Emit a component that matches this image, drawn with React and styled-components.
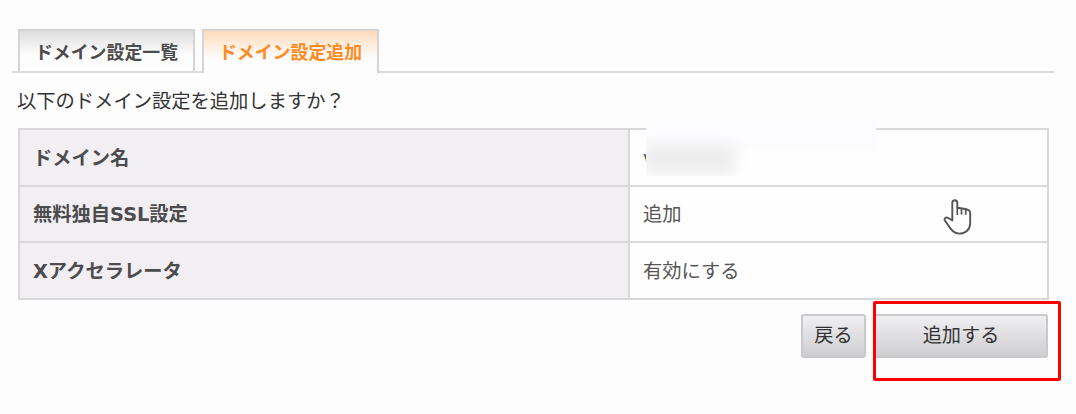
import React from "react";
import styled, { createGlobalStyle } from "styled-components";

const GlobalStyle = createGlobalStyle`
  * {
    box-sizing: border-box;
  }

  body {
    margin: 0;
    background-color: #fdfdfd;
    font-family: "DejaVu Sans", "Noto Sans CJK JP", sans-serif;
    color: #444;
  }
`;

const Page = styled.main`
  width: 1076px;
  height: 414px;
  padding: 29px 0 0 12px;
  overflow: hidden;
`;

// Tabs
const TabList = styled.div`
  display: flex;
  gap: 7px;
  width: 1042px;
  height: 44px;
  padding-left: 6px;
  border-bottom: 2px solid #dcdcde;
`;

const Tab = styled.button`
  width: ${({ $active }) => ($active ? "177px" : "177px")};
  height: ${({ $active }) => ($active ? "44px" : "42px")};
  padding: ${({ $active }) => ($active ? "2px 0 0" : "3px 0 0")};
  border: 2px solid #d4d4d6;
  border-bottom: none;
  background: ${({ $active }) =>
    $active
      ? "linear-gradient(#ffdcbb, #fdfdfd 65%)"
      : "linear-gradient(#dededf, #fdfdfd 60%)"};
  color: ${({ $active }) => ($active ? "#ff8a1f" : "#4c4c4c")};
  font-family: inherit;
  font-size: 17.9px;
  font-weight: 700;
  line-height: 36px;
  white-space: nowrap;
`;

const Message = styled.p`
  margin: 14px 0 0 5px;
  height: 30px;
  font-size: 19.3px;
  line-height: 30px;
  color: #333;
`;

// Settings table
const SettingsTable = styled.table`
  width: 1031px;
  margin: 11px 0 0 6px;
  border-collapse: collapse;
  table-layout: fixed;
`;

const Row = styled.tr`
  height: ${({ $height }) => $height}px;
`;

const Label = styled.th`
  width: 610px;
  padding: 2px 13px 0;
  border: 2px solid #d8d8da;
  background-color: #f1eff2;
  color: #4c4b4e;
  font-size: 19.3px;
  font-weight: 700;
  line-height: 28px;
  text-align: left;
`;

const Value = styled.td`
  position: relative;
  padding: 2px 13px 0;
  border: 2px solid #d8d8da;
  background-color: #fefefe;
  font-size: 19.3px;
  line-height: 28px;
  color: #555;
`;

// Blurred patch that hides the domain name
const Mask = styled.div`
  position: absolute;
  top: -8px;
  left: 16px;
  width: 230px;
  height: 54px;
  overflow: hidden;
  background: linear-gradient(#fcfcfe 40%, #fefefe 60%);

  &::before {
    content: "";
    position: absolute;
    top: 22px;
    left: -4px;
    width: 93px;
    height: 30px;
    background-color: #eeeeef;
    filter: blur(6px);
  }
`;

const Pointer = styled.svg`
  position: absolute;
  top: 11px;
  left: 313px;
  width: 30px;
  height: 38px;
`;

// Buttons
const Actions = styled.div`
  position: relative;
  display: flex;
  justify-content: flex-end;
  gap: 8px;
  width: 1036px;
  margin-top: 14px;
`;

const Button = styled.button`
  width: ${({ $wide }) => ($wide ? "174px" : "65px")};
  height: 44px;
  padding: 0 0 1px;
  border: 2px solid #c9c9cb;
  border-radius: 3px;
  background: linear-gradient(#f0eff1, #cecdd0);
  color: #333;
  font-family: inherit;
  font-size: 19.2px;
  line-height: 28px;
  white-space: nowrap;
`;

const Highlight = styled.div`
  position: absolute;
  top: -13px;
  right: -13px;
  width: 188px;
  height: 80px;
  border: 3px solid #ff0000;
  border-radius: 2px;
`;

const HandCursor = () => (
  <Pointer viewBox="0 0 30 38" aria-hidden="true">
    <path
      d="M9.3 22.5V5C9.3 1.3 14.3 1.3 14.3 5V9.8L22.5 11L25.5 12.2C26.8 12.8 27.2 13.6 27.2 15V25C27.2 31.5 22.5 35.6 16.5 35.6C12.5 35.6 10 33.8 7.6 30.6L2 22.8C.8 20.6 2.6 18.9 5 19.8L9.3 22.5Z"
      fill="#fefefe"
      stroke="#55535a"
      strokeWidth="1.9"
      strokeLinejoin="round"
    />
    <path
      d="M14.3 9V17M18.5 10.5V16.5M22.7 11V16.8"
      fill="none"
      stroke="#55535a"
      strokeWidth="1.7"
    />
  </Pointer>
);

const App = () => {
  return (
    <>
      <GlobalStyle />
      <Page lang="ja">
        <TabList>
          <Tab>ドメイン設定一覧</Tab>
          <Tab $active>ドメイン設定追加</Tab>
        </TabList>

        <Message>以下のドメイン設定を追加しますか？</Message>

        <SettingsTable>
          <tbody>
            <Row $height={57}>
              <Label>ドメイン名</Label>
              <Value>
                v
                <Mask />
              </Value>
            </Row>
            <Row $height={56}>
              <Label>無料独自SSL設定</Label>
              <Value>
                追加
                <HandCursor />
              </Value>
            </Row>
            <Row $height={57}>
              <Label>Xアクセラレータ</Label>
              <Value>有効にする</Value>
            </Row>
          </tbody>
        </SettingsTable>

        <Actions>
          <Button>戻る</Button>
          <Button $wide>追加する</Button>
          <Highlight />
        </Actions>
      </Page>
    </>
  );
};

export default App;
